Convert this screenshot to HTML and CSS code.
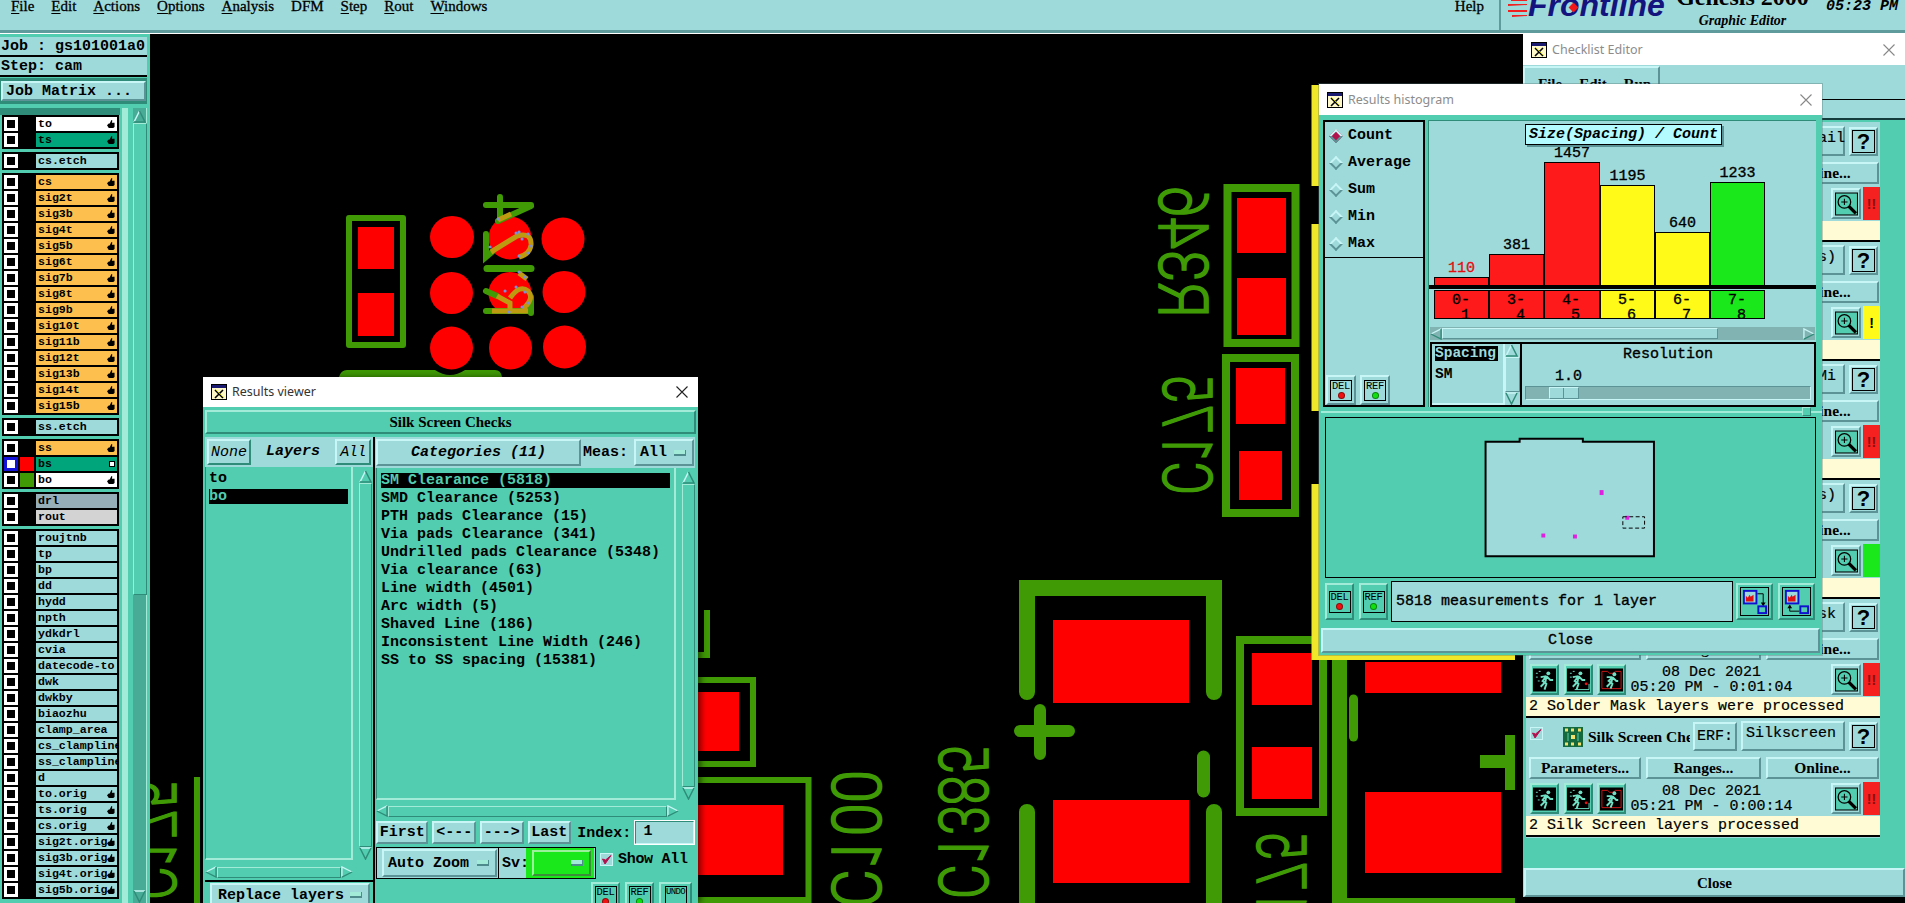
FILE: index.html
```html
<!DOCTYPE html>
<html lang="en">
<head>
<meta charset="utf-8">
<title>Genesis 2000 - Graphic Editor</title>
<link rel="stylesheet" href="styles.css">
</head>
<body>
<svg class="defs" aria-hidden="true">
  <symbol id="winicon" viewBox="0 0 16 16"><rect x=".5" y=".5" width="15" height="15" fill="#fff8c8" stroke="#000"/><rect x="1" y="1" width="14" height="3" fill="#1a1a70"/><path d="M4 6l8 8M12 6l-8 8" stroke="#000" stroke-width="1.6"/><path d="M5 6l7 7" stroke="#c8c800" stroke-width=".8"/></symbol>
  <symbol id="closex" viewBox="0 0 12 12"><path d="M.5.5l11 11M11.500.5l-11 11" fill="none" stroke="currentColor" stroke-width="1.1"/></symbol>
  <symbol id="hand" viewBox="0 0 9 9"><path d="M0 6l2-2 1 0 2-4 1 .5-.5 2.500H8.500V8L7 9H2z" fill="#000"/></symbol>
  <symbol id="a-up" viewBox="0 0 13 13"><path d="M6.500 1L1 12" fill="none" stroke="#c8f5f5" stroke-width="1.500"/><path d="M6.500 1L12 12H1" fill="none" stroke="#2f8c78" stroke-width="1.500"/></symbol>
  <symbol id="a-down" viewBox="0 0 13 13"><path d="M1 1H12" fill="none" stroke="#c8f5f5" stroke-width="1.500"/><path d="M1 1L6.500 12L12 1" fill="none" stroke="#2f8c78" stroke-width="1.500"/></symbol>
  <symbol id="a-left" viewBox="0 0 13 13"><path d="M1 6.500L12 1" fill="none" stroke="#c8f5f5" stroke-width="1.500"/><path d="M1 6.500L12 12V1" fill="none" stroke="#2f8c78" stroke-width="1.500"/></symbol>
  <symbol id="a-right" viewBox="0 0 13 13"><path d="M1 12V1L12 6.500" fill="none" stroke="#c8f5f5" stroke-width="1.500"/><path d="M12 6.500L1 12" fill="none" stroke="#2f8c78" stroke-width="1.500"/></symbol>
  <symbol id="mag" viewBox="0 0 22 22"><rect x=".5" y=".5" width="21" height="21" fill="#52cdaf" stroke="#000"/><circle cx="9" cy="9" r="6" fill="none" stroke="#000" stroke-width="1.200"/><path d="M6 9h6M9 6v6" stroke="#000"/><path d="M13 13l7 7" stroke="#000" stroke-width="3.200"/></symbol>
  <symbol id="run1" viewBox="0 0 24 24"><rect width="24" height="24" fill="#000"/><circle cx="16" cy="5" r="2" fill="#6fe0c4"/><path d="M14 8l-4 5 4 3-2 6M14 8l-1 6-5 5M14 8l4 4 3 0M8 9l6-1" fill="none" stroke="#6fe0c4" stroke-width="2"/><path d="M3 5h2M6 3h2M3 9h2M5 13h2" stroke="#6fe0c4"/></symbol>
  <symbol id="run2" viewBox="0 0 24 24"><rect width="24" height="24" fill="#000"/><circle cx="14" cy="5" r="2" fill="#6fe0c4"/><path d="M12 8l-4 5 4 3-2 6M12 8l-1 6-5 5M12 8l4 4 3 0M6 9l6-1" fill="none" stroke="#6fe0c4" stroke-width="2"/><path d="M3 5h2M6 3h2M3 9h2" stroke="#6fe0c4"/><path d="M8 22h15V16" fill="none" stroke="#6fe0c4"/><circle cx="20" cy="16" r="1.500" fill="#f01010"/></symbol>
  <symbol id="run3" viewBox="0 0 24 24"><rect width="24" height="24" fill="#000"/><path d="M2 3h6l2 2h4l2-2h6v18H2z" fill="none" stroke="#d01818"/><circle cx="15" cy="6" r="2" fill="#6fe0c4"/><path d="M13 9l-4 4 4 3-2 5M13 9l-1 5-5 5M13 9l4 4 2 0M7 9l6 0" fill="none" stroke="#6fe0c4" stroke-width="2"/></symbol>
  <symbol id="swap1" viewBox="0 0 30 30"><rect x=".5" y=".5" width="29" height="29" fill="none" stroke="#000"/><rect x="4" y="4" width="13" height="13" fill="#9fdadb" stroke="#1010d0" stroke-width="2"/><path d="M6 15V9l2 2 2-3 1 2 3-2v7z" fill="#e01010"/><path d="M18 7h6v12" fill="none" stroke="#000"/><path d="M21.500 16h5l-2.500 4z" fill="#000"/><rect x="19" y="20" width="8" height="7" fill="none" stroke="#1010d0" stroke-width="2"/></symbol>
  <symbol id="swap2" viewBox="0 0 30 30"><rect x=".5" y=".5" width="29" height="29" fill="none" stroke="#000"/><rect x="4" y="4" width="13" height="13" fill="#9fdadb" stroke="#1010d0" stroke-width="2"/><path d="M6 15V9l2 2 2-3 1 2 3-2v7z" fill="#e01010"/><path d="M8 19v6h10" fill="none" stroke="#000"/><path d="M5.500 22h5l-2.500-4z" fill="#000"/><rect x="19" y="20" width="8" height="7" fill="none" stroke="#1010d0" stroke-width="2"/></symbol>
  <symbol id="chip" viewBox="0 0 20 20"><rect width="20" height="20" fill="#146a3c"/><path d="M2 3h3M8 3h3M15 3h3M2 17h3M8 17h3M15 17h3" stroke="#f0e070" stroke-width="3"/><rect x="8" y="8" width="4" height="4" fill="#f0e070"/><path d="M5 6v8M15 6v8" stroke="#52cdaf"/></symbol>
  <symbol id="check" viewBox="0 0 13 13"><rect x=".5" y=".5" width="12" height="12" fill="#9fdadb" stroke="#c8f5f5"/><path d="M2.500 6L5 11 11 2.500 5.500 7z" fill="#b3104e" stroke="#b3104e"/></symbol>
  <symbol id="speed" viewBox="0 0 20 20"><path d="M0 6H19V7L0 8zM3 1H19V3L3 3zM0 12H19L19 14H0zM4 17H19V18L4 19z" fill="#f02020"/></symbol>
</svg>

<div class="app">
  <header class="topbar">
    <nav class="menubar">
      <span class="mi"><u>F</u>ile</span><span class="mi"><u>E</u>dit</span><span class="mi"><u>A</u>ctions</span><span class="mi"><u>O</u>ptions</span><span class="mi"><u>A</u>nalysis</span><span class="mi">DFM</span><span class="mi"><u>S</u>tep</span><span class="mi"><u>R</u>out</span><span class="mi"><u>W</u>indows</span>
      <span class="mi mi-help">Help</span>
    </nav>
    <div class="brand">
      <svg class="speed"><use href="#speed"/></svg>
      <span class="frontline">Frontline<i class="diamond"></i></span>
      <div class="product"><div class="genesis">Genesis 2000</div><div class="grapheditor">Graphic Editor</div></div>
      <span class="clock">05:23 PM</span>
    </div>
  </header>

  <main class="workspace">
    <aside class="left">
      <div class="jobline">Job : gs101001a0</div>
      <div class="jobline">Step: cam</div>
      <div class="matrix-frame"><button class="btn bv matrix">Job Matrix ...</button></div>
      <div class="layerwrap">
        <div class="layerlist">
          <div class="lg">
            <div class="lr"><i class="cb"></i><i class="sw"></i><span class="ln c-white">to<svg class="hd"><use href="#hand"/></svg></span></div>
            <div class="lr"><i class="cb"></i><i class="sw"></i><span class="ln c-green">ts<svg class="hd"><use href="#hand"/></svg></span></div>
          </div>
          <div class="lg"><div class="lr"><i class="cb"></i><i class="sw"></i><span class="ln">cs.etch</span></div></div>
          <div class="lg">
            <div class="lr"><i class="cb"></i><i class="sw"></i><span class="ln c-sig">cs<svg class="hd"><use href="#hand"/></svg></span></div>
            <div class="lr"><i class="cb"></i><i class="sw"></i><span class="ln c-sig">sig2t<svg class="hd"><use href="#hand"/></svg></span></div>
            <div class="lr"><i class="cb"></i><i class="sw"></i><span class="ln c-sig">sig3b<svg class="hd"><use href="#hand"/></svg></span></div>
            <div class="lr"><i class="cb"></i><i class="sw"></i><span class="ln c-sig">sig4t<svg class="hd"><use href="#hand"/></svg></span></div>
            <div class="lr"><i class="cb"></i><i class="sw"></i><span class="ln c-sig">sig5b<svg class="hd"><use href="#hand"/></svg></span></div>
            <div class="lr"><i class="cb"></i><i class="sw"></i><span class="ln c-sig">sig6t<svg class="hd"><use href="#hand"/></svg></span></div>
            <div class="lr"><i class="cb"></i><i class="sw"></i><span class="ln c-sig">sig7b<svg class="hd"><use href="#hand"/></svg></span></div>
            <div class="lr"><i class="cb"></i><i class="sw"></i><span class="ln c-sig">sig8t<svg class="hd"><use href="#hand"/></svg></span></div>
            <div class="lr"><i class="cb"></i><i class="sw"></i><span class="ln c-sig">sig9b<svg class="hd"><use href="#hand"/></svg></span></div>
            <div class="lr"><i class="cb"></i><i class="sw"></i><span class="ln c-sig">sig10t<svg class="hd"><use href="#hand"/></svg></span></div>
            <div class="lr"><i class="cb"></i><i class="sw"></i><span class="ln c-sig">sig11b<svg class="hd"><use href="#hand"/></svg></span></div>
            <div class="lr"><i class="cb"></i><i class="sw"></i><span class="ln c-sig">sig12t<svg class="hd"><use href="#hand"/></svg></span></div>
            <div class="lr"><i class="cb"></i><i class="sw"></i><span class="ln c-sig">sig13b<svg class="hd"><use href="#hand"/></svg></span></div>
            <div class="lr"><i class="cb"></i><i class="sw"></i><span class="ln c-sig">sig14t<svg class="hd"><use href="#hand"/></svg></span></div>
            <div class="lr"><i class="cb"></i><i class="sw"></i><span class="ln c-sig">sig15b<svg class="hd"><use href="#hand"/></svg></span></div>
          </div>
          <div class="lg"><div class="lr"><i class="cb"></i><i class="sw"></i><span class="ln">ss.etch</span></div></div>
          <div class="lg">
            <div class="lr"><i class="cb"></i><i class="sw"></i><span class="ln c-sig">ss<svg class="hd"><use href="#hand"/></svg></span></div>
            <div class="lr"><i class="cb cb-on"></i><i class="sw sw-red"></i><span class="ln c-green">bs<i class="grid-mark"></i></span></div>
            <div class="lr"><i class="cb"></i><i class="sw sw-grn"></i><span class="ln c-white">bo<svg class="hd"><use href="#hand"/></svg></span></div>
          </div>
          <div class="lg">
            <div class="lr"><i class="cb"></i><i class="sw"></i><span class="ln c-drl">drl</span></div>
            <div class="lr"><i class="cb"></i><i class="sw"></i><span class="ln c-rout">rout</span></div>
          </div>
          <div class="lg">
            <div class="lr"><i class="cb"></i><i class="sw"></i><span class="ln">roujtnb</span></div>
            <div class="lr"><i class="cb"></i><i class="sw"></i><span class="ln">tp</span></div>
            <div class="lr"><i class="cb"></i><i class="sw"></i><span class="ln">bp</span></div>
            <div class="lr"><i class="cb"></i><i class="sw"></i><span class="ln">dd</span></div>
            <div class="lr"><i class="cb"></i><i class="sw"></i><span class="ln">hydd</span></div>
            <div class="lr"><i class="cb"></i><i class="sw"></i><span class="ln">npth</span></div>
            <div class="lr"><i class="cb"></i><i class="sw"></i><span class="ln">ydkdrl</span></div>
            <div class="lr"><i class="cb"></i><i class="sw"></i><span class="ln">cvia</span></div>
            <div class="lr"><i class="cb"></i><i class="sw"></i><span class="ln">datecode-to</span></div>
            <div class="lr"><i class="cb"></i><i class="sw"></i><span class="ln">dwk</span></div>
            <div class="lr"><i class="cb"></i><i class="sw"></i><span class="ln">dwkby</span></div>
            <div class="lr"><i class="cb"></i><i class="sw"></i><span class="ln">biaozhu</span></div>
            <div class="lr"><i class="cb"></i><i class="sw"></i><span class="ln">clamp_area</span></div>
            <div class="lr"><i class="cb"></i><i class="sw"></i><span class="ln">cs_clampline</span></div>
            <div class="lr"><i class="cb"></i><i class="sw"></i><span class="ln">ss_clampline</span></div>
            <div class="lr"><i class="cb"></i><i class="sw"></i><span class="ln">d</span></div>
            <div class="lr"><i class="cb"></i><i class="sw"></i><span class="ln">to.orig<svg class="hd"><use href="#hand"/></svg></span></div>
            <div class="lr"><i class="cb"></i><i class="sw"></i><span class="ln">ts.orig<svg class="hd"><use href="#hand"/></svg></span></div>
            <div class="lr"><i class="cb"></i><i class="sw"></i><span class="ln">cs.orig<svg class="hd"><use href="#hand"/></svg></span></div>
            <div class="lr"><i class="cb"></i><i class="sw"></i><span class="ln">sig2t.orig<svg class="hd"><use href="#hand"/></svg></span></div>
            <div class="lr"><i class="cb"></i><i class="sw"></i><span class="ln">sig3b.orig<svg class="hd"><use href="#hand"/></svg></span></div>
            <div class="lr"><i class="cb"></i><i class="sw"></i><span class="ln">sig4t.orig<svg class="hd"><use href="#hand"/></svg></span></div>
            <div class="lr"><i class="cb"></i><i class="sw"></i><span class="ln">sig5b.orig<svg class="hd"><use href="#hand"/></svg></span></div>
          </div>
        </div>
        <div class="rail-light"></div>
        <div class="rail">
          <svg class="ar"><use href="#a-up"/></svg>
          <div class="rail-thumb"></div>
          <div class="rail-trough"></div>
          <svg class="ar"><use href="#a-down"/></svg>
        </div>
      </div>
    </aside>

    <div class="canvas">
      <svg class="pcb" viewBox="150 34 1755 869">
        <!-- left pad block -->
        <rect class="g6b" x="349" y="218" width="54" height="127"/>
        <rect class="r" x="358" y="227" width="36" height="42"/>
        <rect class="r" x="358" y="293" width="36" height="43"/>
        <ellipse class="r" cx="452" cy="237" rx="22" ry="21"/>
        <ellipse class="r" cx="510" cy="238" rx="21.500" ry="21.500"/>
        <ellipse class="r" cx="563" cy="239" rx="21.500" ry="21.500"/>
        <ellipse class="r" cx="451.500" cy="293" rx="21.500" ry="21"/>
        <ellipse class="r" cx="510" cy="293" rx="21.500" ry="21"/>
        <ellipse class="r" cx="564" cy="292" rx="21.500" ry="21"/>
        <ellipse class="r" cx="451.500" cy="348" rx="21.500" ry="21.500"/>
        <ellipse class="r" cx="510.500" cy="348" rx="21.500" ry="21.500"/>
        <ellipse class="r" cx="564.500" cy="347" rx="21.500" ry="21.500"/>
        <path class="g6" d="M486 205H531M500 197V217M531 206L498 221"/>
        <path class="g6" d="M486 234V257L492 252"/>
        <path class="g7" d="M487 268.500H531"/>
        <path class="g6" d="M486 291L497 296M486 311H531M531 297V313"/>
        <path class="y5" d="M498 220L511 214M491 252L517 236Q532 232 531 245Q530 254 519 257M519 273L527 279M497 296L510 303V311M510 298Q520 284 528 291Q535 298 523 309M492 311H528"/>
        <path class="dots" d="M498 219h.1M519 232h.1M516 233h.1M528 234h.1M522 239h.1M490 247h.1M531 246h.1M528 253h.1M519 256h.1M519 272h.1M525 277h.1M509 312h.1M505 291h.1M516 287h.1M525 292h.1M528 303h.1M522 307h.1"/>
        <path class="gf" d="M339 377Q341 370 347 370H435Q450 380 465 370H495Q501 370 502 377Z"/>

        <!-- upper right parts -->
        <rect class="g8" x="1227.500" y="188" width="68" height="155"/>
        <rect class="r" x="1237" y="198" width="49" height="55"/>
        <rect class="r" x="1237" y="278" width="49" height="57"/>
        <rect class="g8" x="1226" y="358" width="69" height="155"/>
        <rect class="r" x="1236" y="368" width="49" height="56"/>
        <rect class="r" x="1239" y="451" width="43" height="49"/>
        <text class="silk" font-size="68" textLength="132" lengthAdjust="spacingAndGlyphs" transform="matrix(0 -1 -1 0 1159 318)">R346</text>
        <text class="silk" font-size="68" textLength="119" lengthAdjust="spacingAndGlyphs" transform="matrix(0 -1 -1 0 1163 495)">C175</text>

        <!-- big capacitor -->
        <path class="g16" d="M1027 692V588H1214V692"/>
        <path class="g16" d="M1027 812V910M1214 812V910"/>
        <rect class="r" x="1053" y="620" width="136" height="83"/>
        <rect class="r" x="1053" y="800" width="136" height="83"/>
        <path class="g12" d="M1020 731H1069M1040 710V754"/>
        <path class="g13" d="M1203.500 757V791"/>
        <text class="silk" font-size="68" textLength="153" lengthAdjust="spacingAndGlyphs" transform="matrix(0 -1 -1 0 939 899)">C1385</text>
        <text class="silk" font-size="68" textLength="138" lengthAdjust="spacingAndGlyphs" transform="matrix(0 -1 -1 0 832 908)">C100</text>

        <!-- pads next to the results viewer -->
        <path class="g6t" d="M707 610V655H698M690 680H753V764H690"/>
        <rect class="r" x="690" y="692" width="49" height="59"/>
        <path class="g6t" d="M695 780H808.500V900H695"/>
        <rect class="r" x="690" y="805" width="93" height="70"/>
        <path class="g6t" d="M197 777V903"/>
        <text class="silk" font-size="68" textLength="119" lengthAdjust="spacingAndGlyphs" transform="matrix(0 -1 -1 0 127 900)">C175</text>

        <!-- lower right parts -->
        <rect class="g8" x="1240" y="640" width="83" height="172"/>
        <rect class="r" x="1252" y="653" width="60" height="52"/>
        <rect class="r" x="1252" y="747" width="60" height="52"/>
        <text class="silk" font-size="68" textLength="119" lengthAdjust="spacingAndGlyphs" transform="matrix(0 -1 -1 0 1257 952)">C175</text>
        <rect class="gf" x="1332" y="660" width="15" height="243"/>
        <path class="g9" d="M1353.500 699V737"/>
        <rect class="r" x="1365" y="662" width="136" height="31"/>
        <rect class="r" x="1365" y="792" width="136" height="81"/>
        <rect class="gf" x="1505" y="735" width="10" height="55"/>
        <rect class="gf" x="1480" y="755" width="30" height="13"/>
        <rect class="gf" x="1340" y="898" width="175" height="5"/>

        <!-- yellow frame of a window under the histogram -->
        <path class="yf" d="M1311.500 85H1319V186H1311.500ZM1311.500 224H1319V411H1311.500ZM1311.500 484H1319V655H1515V660H1311.500Z"/>
      </svg>
    </div>
  </main>

  <!-- Checklist editor -->
  <section class="win win-check">
    <header class="tbar tbar-off"><svg class="wi"><use href="#winicon"/></svg><span class="tt">Checklist Editor</span><svg class="xx"><use href="#closex"/></svg></header>
    <div class="ck-menu">
      <div class="bv ck-menubox"><span>File</span><span>Edit</span><span>Run</span></div>
    </div>
    <div class="ck-strip"></div>
    <div class="ck-body">
      <div class="ck-list">
        <article class="entry entry-first">
          <div class="e1"><svg class="chk"><use href="#check"/></svg><svg class="chipi"><use href="#chip"/></svg><b class="etitle"></b><button class="btn bv erf">ERF:</button><div class="bv field">Signal Fail</div><button class="btn bv help">?</button></div>
          <div class="e2"><button class="btn bv p1">Parameters...</button><button class="btn bv p2">Ranges...</button><button class="btn bv p3">Online...</button></div>
          <div class="e3"><span class="bvt ib"><svg><use href="#run1"/></svg></span><span class="bvt ib"><svg><use href="#run2"/></svg></span><span class="bvt ib"><svg><use href="#run3"/></svg></span><div class="etime"></div><span class="bvt ib mg"><svg><use href="#mag"/></svg></span><span class="st st-red">!!</span></div>
          <div class="msg"></div>
        </article>
        <article class="entry">
          <div class="e1"><svg class="chk"><use href="#check"/></svg><svg class="chipi"><use href="#chip"/></svg><b class="etitle"></b><button class="btn bv erf">ERF:</button><div class="bv field">Nets(pads)</div><button class="btn bv help">?</button></div>
          <div class="e2"><button class="btn bv p1">Parameters...</button><button class="btn bv p2">Ranges...</button><button class="btn bv p3">Online...</button></div>
          <div class="e3"><span class="bvt ib"><svg><use href="#run1"/></svg></span><span class="bvt ib"><svg><use href="#run2"/></svg></span><span class="bvt ib"><svg><use href="#run3"/></svg></span><div class="etime"></div><span class="bvt ib mg"><svg><use href="#mag"/></svg></span><span class="st st-yel">!</span></div>
          <div class="msg"></div>
        </article>
        <article class="entry">
          <div class="e1"><svg class="chk"><use href="#check"/></svg><svg class="chipi"><use href="#chip"/></svg><b class="etitle"></b><button class="btn bv erf">ERF:</button><div class="bv field">Spacing Mi</div><button class="btn bv help">?</button></div>
          <div class="e2"><button class="btn bv p1">Parameters...</button><button class="btn bv p2">Ranges...</button><button class="btn bv p3">Online...</button></div>
          <div class="e3"><span class="bvt ib"><svg><use href="#run1"/></svg></span><span class="bvt ib"><svg><use href="#run2"/></svg></span><span class="bvt ib"><svg><use href="#run3"/></svg></span><div class="etime"></div><span class="bvt ib mg"><svg><use href="#mag"/></svg></span><span class="st st-red">!!</span></div>
          <div class="msg"></div>
        </article>
        <article class="entry">
          <div class="e1"><svg class="chk"><use href="#check"/></svg><svg class="chipi"><use href="#chip"/></svg><b class="etitle"></b><button class="btn bv erf">ERF:</button><div class="bv field">Nets(pads)</div><button class="btn bv help">?</button></div>
          <div class="e2"><button class="btn bv p1">Parameters...</button><button class="btn bv p2">Ranges...</button><button class="btn bv p3">Online...</button></div>
          <div class="e3"><span class="bvt ib"><svg><use href="#run1"/></svg></span><span class="bvt ib"><svg><use href="#run2"/></svg></span><span class="bvt ib"><svg><use href="#run3"/></svg></span><div class="etime"></div><span class="bvt ib mg"><svg><use href="#mag"/></svg></span><span class="st st-grn"></span></div>
          <div class="msg"></div>
        </article>
        <article class="entry">
          <div class="e1"><svg class="chk"><use href="#check"/></svg><svg class="chipi"><use href="#chip"/></svg><b class="etitle">Solder Mask Che</b><button class="btn bv erf">ERF:</button><div class="bv field">SolderMask</div><button class="btn bv help">?</button></div>
          <div class="e2"><button class="btn bv p1">Parameters...</button><button class="btn bv p2">Ranges...</button><button class="btn bv p3">Online...</button></div>
          <div class="e3"><span class="bvt ib"><svg><use href="#run1"/></svg></span><span class="bvt ib"><svg><use href="#run2"/></svg></span><span class="bvt ib"><svg><use href="#run3"/></svg></span><div class="etime">08 Dec 2021<br>05:20 PM - 0:01:04</div><span class="bvt ib mg"><svg><use href="#mag"/></svg></span><span class="st st-red">!!</span></div>
          <div class="msg">2 Solder Mask layers were processed</div>
        </article>
        <article class="entry">
          <div class="e1"><svg class="chk"><use href="#check"/></svg><svg class="chipi"><use href="#chip"/></svg><b class="etitle">Silk Screen Che</b><button class="btn bv erf">ERF:</button><div class="bv field">Silkscreen</div><button class="btn bv help">?</button></div>
          <div class="e2"><button class="btn bv p1">Parameters...</button><button class="btn bv p2">Ranges...</button><button class="btn bv p3">Online...</button></div>
          <div class="e3"><span class="bvt ib"><svg><use href="#run1"/></svg></span><span class="bvt ib"><svg><use href="#run2"/></svg></span><span class="bvt ib"><svg><use href="#run3"/></svg></span><div class="etime">08 Dec 2021<br>05:21 PM - 0:00:14</div><span class="bvt ib mg"><svg><use href="#mag"/></svg></span><span class="st st-red">!!</span></div>
          <div class="msg">2 Silk Screen layers processed</div>
        </article>
      </div>
    </div>
    <button class="btn bv ck-close">Close</button>
  </section>

  <!-- Results histogram -->
  <section class="win win-hist">
    <header class="tbar tbar-off"><svg class="wi"><use href="#winicon"/></svg><span class="tt">Results histogram</span><svg class="xx"><use href="#closex"/></svg></header>
    <div class="hist-top">
      <div class="radios">
        <div class="radio-group">
          <label class="radio"><i class="dia dia-on"></i>Count</label>
          <label class="radio"><i class="dia"></i>Average</label>
          <label class="radio"><i class="dia"></i>Sum</label>
          <label class="radio"><i class="dia"></i>Min</label>
          <label class="radio"><i class="dia"></i>Max</label>
        </div>
        <div class="radio-tools">
          <span class="bv tool"><span class="tool-in"><span class="tool-t">DEL</span><i class="dot dot-r"></i></span></span>
          <span class="bv tool"><span class="tool-in"><span class="tool-t">REF</span><i class="dot dot-g"></i></span></span>
        </div>
      </div>
      <div class="chartcol">
        <div class="chart">
          <div class="chart-title">Size(Spacing) / Count</div>
          <div class="bar-col"><span class="bar-n bar-n-red">110</span><div class="bar b-r" style="height:8px"></div></div>
          <div class="bar-col"><span class="bar-n">381</span><div class="bar b-r" style="height:31px"></div></div>
          <div class="bar-col"><span class="bar-n">1457</span><div class="bar b-r" style="height:123px"></div></div>
          <div class="bar-col"><span class="bar-n">1195</span><div class="bar b-y" style="height:100px"></div></div>
          <div class="bar-col"><span class="bar-n">640</span><div class="bar b-y" style="height:53px"></div></div>
          <div class="bar-col"><span class="bar-n">1233</span><div class="bar b-g" style="height:103px"></div></div>
        </div>
        <div class="axis"></div>
        <div class="bins">
          <div class="bin b-r">0-
 1</div>
          <div class="bin b-r">3-
 4</div>
          <div class="bin b-r">4-
 5</div>
          <div class="bin b-y">5-
 6</div>
          <div class="bin b-y">6-
 7</div>
          <div class="bin b-g">7-
 8</div>
        </div>
        <div class="hs hs-hist"><svg class="ar"><use href="#a-left"/></svg><div class="hs-thumb"></div><svg class="ar"><use href="#a-right"/></svg></div>
        <div class="lowpanel">
          <div class="speclist"><span class="spec-on">Spacing</span><span>SM</span></div>
          <div class="vs vs-spec"><svg class="ar"><use href="#a-up"/></svg><div class="vs-thumb"></div><svg class="ar"><use href="#a-down"/></svg></div>
          <div class="respane">
            <div class="res-title">Resolution</div>
            <div class="res-val">1.0</div>
            <div class="slider"><div class="slider-thumb"></div></div>
          </div>
        </div>
      </div>
    </div>
    <div class="sash"><i class="sash-h"></i></div>
    <div class="mappane">
      <svg class="board" viewBox="1325 417 491 161">
        <path d="M1484.500 441H1519V438H1583V441H1655V557H1484.500Z" fill="#9fdadb" stroke="#000" stroke-width="2"/>
        <rect x="1600" y="490" width="4" height="5" fill="#e020e0"/>
        <rect x="1626" y="516" width="4" height="4" fill="#e020e0"/>
        <rect x="1541" y="534" width="4" height="4" fill="#e020e0"/>
        <rect x="1573" y="535" width="4" height="4" fill="#e020e0"/>
        <rect x="1623.500" y="517" width="22" height="11.500" fill="none" stroke="#000" stroke-dasharray="4 2.500"/>
      </svg>
    </div>
    <div class="hist-foot">
      <span class="bvt tool"><span class="tool-in"><span class="tool-t">DEL</span><i class="dot dot-r"></i></span></span>
      <span class="bvt tool"><span class="tool-in"><span class="tool-t">REF</span><i class="dot dot-g"></i></span></span>
      <div class="hist-status">5818 measurements for 1 layer</div>
      <span class="bvt tool tool-w"><svg><use href="#swap1"/></svg></span>
      <span class="bvt tool tool-w"><svg><use href="#swap2"/></svg></span>
    </div>
    <button class="btn bv hist-close">Close</button>
  </section>

  <!-- Results viewer -->
  <section class="win win-results">
    <header class="tbar"><svg class="wi"><use href="#winicon"/></svg><span class="tt">Results viewer</span><svg class="xx"><use href="#closex"/></svg></header>
    <button class="btn bvt rv-head">Silk Screen Checks</button>
    <div class="rv-cols">
      <div class="rv-left">
        <div class="tabs">
          <button class="btn bv tab-none">None</button>
          <span class="tab-layers">Layers</span>
          <button class="btn bv tab-all">All</button>
        </div>
        <div class="rv-listrow rv-listrow-l">
          <div class="rvlist rvlist-l"><div class="li">to</div><div class="li li-on">bo</div></div>
          <div class="vs"><svg class="ar"><use href="#a-up"/></svg><div class="vs-thumb"></div><svg class="ar"><use href="#a-down"/></svg></div>
        </div>
        <div class="hs hs-l"><svg class="ar"><use href="#a-left"/></svg><div class="hs-thumb"></div><svg class="ar"><use href="#a-right"/></svg></div>
        <div class="rv-div"></div>
        <button class="btn bv replace">Replace layers<i class="ddmark"></i></button>
      </div>
      <div class="rv-right">
        <div class="tabs tabs-r">
          <button class="btn bv tab-cat">Categories (11)</button>
          <span class="meas">Meas:</span>
          <button class="btn bv tab-meas">All<i class="ddmark"></i></button>
        </div>
        <div class="rv-listrow rv-listrow-r">
          <div class="rvlist rvlist-r">
            <div class="li li-on">SM Clearance (5818)</div>
            <div class="li">SMD Clearance (5253)</div>
            <div class="li">PTH pads Clearance (15)</div>
            <div class="li">Via pads Clearance (341)</div>
            <div class="li">Undrilled pads Clearance (5348)</div>
            <div class="li">Via clearance (63)</div>
            <div class="li">Line width (4501)</div>
            <div class="li">Arc width (5)</div>
            <div class="li">Shaved Line (186)</div>
            <div class="li">Inconsistent Line Width (246)</div>
            <div class="li">SS to SS spacing (15381)</div>
          </div>
          <div class="vs"><svg class="ar"><use href="#a-up"/></svg><div class="vs-thumb"></div><svg class="ar"><use href="#a-down"/></svg></div>
        </div>
        <div class="hs hs-r"><svg class="ar"><use href="#a-left"/></svg><div class="hs-thumb"></div><svg class="ar"><use href="#a-right"/></svg></div>
        <div class="navrow">
          <button class="btn bv nav-first">First</button>
          <button class="btn bv nav-a">&lt;---</button>
          <button class="btn bv nav-a">---&gt;</button>
          <button class="btn bv nav-a">Last</button>
          <span class="nav-label">Index:</span>
          <div class="bv nav-field">1</div>
        </div>
        <div class="optrow">
          <div class="optbox">
            <button class="btn bv autozoom">Auto Zoom<i class="ddmark"></i></button>
            <span class="sv">Sv:</span>
            <div class="sv-green"><button class="btn bv sv-btn"><i class="ddmark"></i></button></div>
          </div>
          <svg class="chk opt-check"><use href="#check"/></svg>
          <span class="showall">Show All</span>
        </div>
        <div class="toolrow">
          <span class="bvt tool tool-s"><span class="tool-in"><span class="tool-t">DEL</span><i class="dot dot-r"></i></span></span>
          <span class="bvt tool tool-s"><span class="tool-in"><span class="tool-t">REF</span><i class="dot dot-g"></i></span></span>
          <span class="bvt tool tool-s"><span class="tool-in"><span class="tool-t tool-u">UNDO</span></span></span>
        </div>
      </div>
    </div>
  </section>
</div>
</body>
</html>
```

FILE: styles.css
```css
:root{
  --lt:#9fdadb;
  --teal:#52cdaf;
  --mono:"Liberation Mono","DejaVu Sans Mono",monospace;
  --serif:"Liberation Serif","Times New Roman",serif;
}
*{box-sizing:border-box}
html,body{margin:0;padding:0;background:#000}
body{width:1905px;height:903px;overflow:hidden;font:bold 15px/15px var(--mono);color:#000}
.defs{position:absolute;width:0;height:0}
.app{position:relative;width:1905px;height:903px;display:grid;grid-template-rows:34px 1fr;overflow:hidden}

.btn{font:inherit;color:inherit;padding:0;margin:0;cursor:default;display:flex;align-items:center;justify-content:center;white-space:pre}
.bv{border:2px solid;border-color:#c8f5f5 #5b9396 #5b9396 #c8f5f5;background:var(--lt)}
.bvt{border:2px solid;border-color:#a3ebd9 #2f8c78 #2f8c78 #a3ebd9;background:var(--teal)}

/* top bar */
.topbar{display:flex;background:var(--lt);border-bottom:1px solid #fff;box-shadow:inset 0 -3px 0 #5f9a9c;overflow:hidden;height:34px}
.menubar{width:1501px;display:flex;gap:17px;padding-left:11px;border-right:2px solid #5f9a9c;align-items:flex-start;height:33px}
.mi{font:normal 15px/16px var(--serif);margin-top:-2px;-webkit-text-stroke:.3px #000}
.mi u{text-underline-offset:2px}
.mi-help{margin-left:auto;margin-right:15px}
.brand{flex:1;display:flex;align-items:flex-start;padding-left:7px;position:relative;height:33px}
.speed{width:20px;height:20px;margin-top:-2px}
.frontline{position:relative;font:italic bold 32px/32px "Liberation Sans",sans-serif;color:#14147e;margin-top:-11px;margin-left:0;width:145px;white-space:nowrap}
.diamond{position:absolute;left:42px;top:15px;width:7px;height:7px;background:#f01818;transform:rotate(45deg)}
.product{width:137px;text-align:center;margin-left:1px}
.genesis{font:bold 24px/24px var(--serif);margin-top:-15px;white-space:nowrap}
.grapheditor{font:italic bold 14px/16px var(--serif);margin-top:4px}
.clock{font:italic bold 15px/15px var(--mono);margin-left:15px;margin-top:-1px;white-space:pre}

/* left panel */
.workspace{display:flex;min-height:0;background:#000}
.left{width:150px;background:var(--teal);padding-top:3px;flex:none;overflow:hidden;display:flex;flex-direction:column}
.jobline{height:20px;margin-right:3px;background:var(--lt);border-bottom:2px solid #000;padding-left:1px;line-height:19px;white-space:pre}
.matrix-frame{height:26px;margin:1px 3px 0 0;background:#2f8c78;padding:3px 1px}
.matrix{width:100%;height:20px;justify-content:flex-start;padding-left:3px}
.layerwrap{flex:1;display:flex;margin-top:4px;min-height:0}
.layerlist{width:120px;padding-left:2px;border-top:7px solid #2f8c78;display:flex;flex-direction:column;gap:3px;overflow:hidden;flex:none}
.lg{background:#000;padding:2px 2px 0;width:117px}
.lr{display:flex;align-items:flex-start;height:16px;gap:2px}
.cb{width:14px;height:14px;border:3px solid #fff;background:#000;flex:none}
.cb-on{border-color:#1414d8;background:#fff;box-shadow:inset 0 0 0 1px #fff}
.sw{width:14px;height:14px;flex:none}
.sw-red{background:#f00}
.sw-grn{background:#3f9a05}
.ln{width:81px;height:14px;flex:none;position:relative;background:var(--lt);font:bold 11.600px/14px var(--mono);padding-left:2px;overflow:hidden;white-space:nowrap}
.hd{position:absolute;right:2px;top:3px;width:8px;height:8px}
.grid-mark{position:absolute;right:2px;top:4px;width:6px;height:6px;border:1px solid #000;background:#fff}
.c-white{background:#fff}
.c-green{background:#00a57c}
.c-sig{background:#fdc04f}
.c-drl{background:#96aeb8}
.c-rout{background:#d3d3d3}
.rail-light{width:6px;margin-left:2px;background:#a3ebd9;flex:none}
.rail{width:14px;margin-left:5px;display:flex;flex-direction:column;flex:none;padding-top:2px;background:#47ab96;box-shadow:inset -1px 0 0 #a3ebd9}
.rail-thumb{height:472px;background:var(--teal);border:1px solid;border-color:#a3ebd9 #2f8c78 #2f8c78 #a3ebd9}
.rail-trough{flex:1}
.ar{width:13px;height:13px;flex:none;display:block}

/* canvas */
.canvas{flex:1;position:relative;overflow:hidden;background:#000}
.pcb{position:absolute;left:0;top:0;width:1755px;height:869px}
.r{fill:#f00}
.gf{fill:#3f9a05}
.g6,.g6b,.g7,.g8,.g9,.g12,.g13,.g16,.g6t{fill:none;stroke:#3f9a05}
.g6{stroke-width:6;stroke-linecap:round}
.g6b{stroke-width:6;stroke-linejoin:round}
.g6t{stroke-width:6}
.g7{stroke-width:7;stroke-linecap:round}
.g8{stroke-width:8}
.g9{stroke-width:9;stroke-linecap:round}
.g12{stroke-width:12;stroke-linecap:round}
.g13{stroke-width:13;stroke-linecap:round}
.g16{stroke-width:16;stroke-linecap:round}
.y5{fill:none;stroke:#bd9a10;stroke-width:5}
.dots{fill:none;stroke:#7a8ee0;stroke-width:3;stroke-linecap:round}
.yf{fill:#f0e62a}
.silk{font-family:Roboto,"Liberation Sans",sans-serif;font-weight:300;fill:#3f9a05;stroke:#3f9a05;stroke-width:1.600}

/* windows */
.win{position:absolute;display:flex;flex-direction:column;overflow:hidden}
.tbar{height:30px;flex:none;background:#fff;display:flex;align-items:center;padding:0 10px 0 8px;font:12.500px/30px "Noto Sans",sans-serif;color:#333}
.tbar-off{color:#8c8c8c;height:31px}
.wi{width:16px;height:16px;flex:none}
.tt{margin-left:5px;flex:1}
.xx{width:12px;height:12px;flex:none;color:#222}
.tbar-off .xx{color:#888}

/* results viewer */
.win-results{left:203px;top:377px;width:495px;height:526px;background:var(--teal);box-shadow:3px 0 6px rgba(0,0,0,.5)}
.rv-head{height:24px;margin:3px 2px;flex:none;font:bold 15px/20px var(--serif)}
.rv-cols{flex:1;display:flex;padding-left:2px;min-height:0}
.rv-left{width:168px;flex:none;display:flex;flex-direction:column}
.rv-right{width:322px;flex:none;border-left:2px solid #000;padding-left:1px;display:flex;flex-direction:column}
.tabs{height:30px;flex:none;background:var(--lt);display:flex;align-items:flex-start;padding:2px;gap:4px}
.tabs-r{padding:2px 0 0 1px;gap:0;margin-left:-1px;height:31px}
.tabs button,.tab-layers{font-style:italic}
.tab-none{width:44px;height:26px;font-weight:normal;border-color:#c8f5f5 #2f8c78 #2f8c78 #c8f5f5}
.tab-layers{width:76px;height:26px;text-align:center;line-height:26px}
.tab-all{width:36px;height:26px;font-weight:normal;border-color:#c8f5f5 #2f8c78 #2f8c78 #c8f5f5;letter-spacing:-.500px}
.tab-cat{width:205px;height:27px}
.meas{width:53px;padding:6px 0 0 2px}
.tab-meas{width:60px;height:27px;font-style:normal!important;justify-content:flex-start;padding-left:4px;position:relative}
.ddmark{position:absolute;right:6px;top:50%;width:12px;height:6px;margin-top:-3px;background:#a3ebd9;border-bottom:2px solid #4d8b8c;border-right:1px solid #4d8b8c}
.rv-listrow{display:flex;flex:none}
.rv-listrow-l{height:393px}
.rv-listrow-r{height:332px}
.rvlist{border-right:2px solid #a3ebd9;border-bottom:2px solid #a3ebd9;border-left:1px solid #2f8c78;overflow:hidden}
.rvlist-l{width:148px;padding:4px 3px}
.rvlist-r{width:303px;padding:5px 4px}
.li{height:15px;margin-bottom:3px;line-height:15px;white-space:pre}
.li-on{background:#000;color:var(--teal)}
.vs{width:13px;margin-left:6px;display:flex;flex-direction:column;margin-top:3px}
.vs-thumb{flex:1;border:1px solid;border-color:#a3ebd9 #2f8c78 #2f8c78 #a3ebd9;background:var(--teal)}
.rv-listrow-l .vs{margin-top:3px}
.hs{display:flex;align-items:center;height:12px;flex:none;margin-top:5px}
.hs .ar{width:12px;height:12px}
.hs-thumb{flex:1;height:11px;border:1px solid;border-color:#a3ebd9 #2f8c78 #2f8c78 #a3ebd9;background:var(--teal)}
.hs-l{width:148px;margin-top:6px}
.hs-r{width:303px}
.rv-div{height:2px;background:#000;margin-top:2px;flex:none}
.replace{height:24px;margin:1px 0 0 5px;width:160px;flex:none;justify-content:flex-start;padding-left:6px;position:relative}
.navrow{display:flex;align-items:flex-start;margin-top:3px;height:25px;flex:none}
.nav-first{width:53px;height:23px;margin:1px 4px 0 0}
.nav-a{width:44px;height:23px;margin:1px 4px 0 0}
.nav-label{margin:6px 0 0 2px;width:57px}
.nav-field{width:62px;height:25px;border-color:#2f8c78 #c8f5f5 #c8f5f5 #2f8c78;padding:2px 0 0 8px;outline:1px solid #fff;outline-offset:-1px}
.optrow{display:flex;align-items:flex-start;margin-top:2px;height:32px;flex:none}
.optbox{width:220px;height:32px;border:1px solid #000;background:var(--lt);display:flex;margin-left:0;flex:none}
.autozoom{width:115px;height:28px;margin:1px 0 0 5px;justify-content:flex-start;padding-left:4px;position:relative}
.sv{width:28px;margin-left:1px;padding:8px 0 0 3px;border-left:1px solid #000}
.sv-green{width:68px;background:#1ae81a;padding:2px 0 0 6px}
.sv-btn{width:59px;height:26px;background:#1ae81a;position:relative;border-color:#9bf09b #3c8c3c #3c8c3c #9bf09b}
.opt-check{width:13px;height:13px;margin:6px 0 0 4px;flex:none}
.chk{width:13px;height:13px;flex:none}
.showall{margin:5px 0 0 5px;white-space:pre;letter-spacing:-.300px}
.toolrow{display:flex;justify-content:flex-end;gap:5px;margin-top:3px;padding-right:3px}
.tool{display:flex;align-items:center;justify-content:center;width:29px;height:37px;flex:none}
.tool-s{height:34px;flex:none}
.tool-s:last-child{width:33px}
.tool-in{width:22px;height:22px;border:1px solid #000;display:flex;flex-direction:column;align-items:center;overflow:hidden}
.tool-s .tool-in{height:27px;align-self:flex-start;margin-top:2px}
.tool-t{font:normal 10.500px/11px var(--mono);letter-spacing:-.300px}
.tool-u{font-size:9px;letter-spacing:-.600px}
.dot{width:7px;height:7px;border-radius:50%;margin-top:0;flex:none;border:1px solid rgba(0,0,0,.4)}
.dot-r{background:#f01010}
.dot-g{background:#10e010}

/* histogram */
.win-hist{left:1319px;top:84px;width:503px;height:571px;background:var(--teal);box-shadow:0 0 0 1px rgba(80,110,110,.35)}
.hist-top{display:flex;gap:3px;padding:5px 6px 0 4px;height:292px;flex:none}
.radios{width:102px;height:287px;border:2px solid #000;border-right-width:2px;background:var(--lt);display:flex;flex-direction:column;flex:none}
.radio-group{height:136px;border-bottom:1px solid #000}
.radio{display:flex;align-items:center;height:27px;padding-left:6px;gap:7px;white-space:pre}
.dia{width:10px;height:10px;transform:rotate(45deg);border:2px solid;border-color:#c8f5f5 #5b9396 #5b9396 #c8f5f5;background:var(--lt);flex:none}
.dia-on{background:#b3104e}
.radio-tools{margin-top:auto;display:flex;gap:4px;padding:0 0 0 1px}
.radio-tools .tool{width:30px;height:30px}
.radio-tools .tool-in{height:21px}
.chartcol{width:388px;flex:none;background:var(--lt);border-top:1px solid #2f8c78;border-left:1px solid #2f8c78;position:relative}
.chart{position:relative;height:164px;display:grid;grid-template-columns:55px 55px 56px 55px 55px 55px;align-items:end;padding-left:5px}
.chart-title{position:absolute;left:96px;top:3px;width:197px;height:21px;background:#b4fbff;border:1px solid #000;box-shadow:2px 2px 0 #5b9396;font:italic bold 15px/19px var(--mono);padding-left:3px;white-space:pre}
.bar-col{display:flex;flex-direction:column;align-items:center}
.bar-n{font:normal 15px/15px var(--mono);-webkit-text-stroke:.35px #000;margin-bottom:1px}
.bar-n-red{color:#e01010;-webkit-text-stroke:.35px #e01010}
.bar{width:100%;border:1px solid #000;border-bottom:0}
.b-r{background:#fe1a1a}
.b-y{background:#fffa17}
.b-g{background:#1ae81a}
.axis{height:4px;background:#000;margin-bottom:1px}
.bins{display:grid;grid-template-columns:55px 55px 56px 55px 55px 55px;padding-left:5px;height:29px}
.bin{border:1px solid #000;padding:2px 0 0 17px;overflow:hidden;font:normal 15px/15px var(--mono);-webkit-text-stroke:.35px #000;white-space:pre}
.hs-hist{margin:8px 1px 0 1px;height:13px;background:#82b3b3}
.hs-hist .hs-thumb{flex:none;width:276px;height:11px;background:var(--lt);border-color:#c8f5f5 #5b9396 #5b9396 #c8f5f5}
.hs-hist .ar:last-child{margin-left:auto}
.lowpanel{margin:2px 0 0 1px;width:386px;height:65px;border:2px solid #000;display:flex;background:var(--lt)}
.speclist{width:73px;padding:2px 3px;display:flex;flex-direction:column;overflow:hidden;flex:none;border-right:2px solid #c8f5f5;border-bottom:2px solid #c8f5f5;white-space:pre;font-size:14.500px}
.spec-on{background:#000;color:var(--lt);width:63px;overflow:hidden}
.speclist span{line-height:15px;margin-bottom:6px}
.vs-spec{margin:0;width:15px}
.vs-spec .vs-thumb{background:var(--lt);border-color:#c8f5f5 #5b9396 #5b9396 #c8f5f5}
.respane{flex:1;border-left:2px solid #000;padding-top:3px;text-align:center}
.res-title{line-height:15px;font-weight:normal;-webkit-text-stroke:.35px #000}
.res-val{width:60px;margin:7px 0 0 0;text-align:right;line-height:15px;font-weight:normal;-webkit-text-stroke:.35px #000}
.slider{height:14px;margin:2px 3px 0;background:#82b3b3;border:1px solid;border-color:#5b9396 #c8f5f5 #c8f5f5 #5b9396;position:relative}
.slider-thumb{position:absolute;left:23px;top:0;width:30px;height:12px;background:var(--lt);border:1px solid;border-color:#c8f5f5 #5b9396 #5b9396 #c8f5f5;box-shadow:inset -14px 0 0 var(--lt),inset -15px 0 0 #5b9396}
.sash{height:11px;flex:none;position:relative}
.sash::before{content:"";position:absolute;left:2px;right:0;top:4px;height:2px;background:#a3ebd9}
.sash-h{position:absolute;right:11px;top:0;width:9px;height:9px;background:var(--teal);border:1px solid;border-color:#a3ebd9 #2f8c78 #2f8c78 #a3ebd9}
.mappane{margin:-1px 6px 0 6px;height:161px;border:1px solid #000;flex:none;overflow:hidden}
.board{display:block;width:489px;height:159px}
.hist-foot{display:flex;align-items:flex-start;height:41px;margin-top:3px;padding-left:6px;flex:none}
.hist-foot>.tool{margin:2px 5px 0 0}
.hist-foot>.tool+.tool:nth-child(2){margin-right:3px}
.hist-status{width:342px;height:41px;background:var(--lt);border:1px solid #000;padding-left:4px;line-height:39px;font-weight:normal;margin-right:3px;white-space:pre;-webkit-text-stroke:.35px #000}
.tool-w{width:37px;height:37px}
.tool-w svg{width:29px;height:29px}
.hist-foot>.tool-w{margin-right:5px}
.hist-close{height:25px;margin:6px 2px 0;flex:none;font-weight:normal;-webkit-text-stroke:.35px #000}

/* checklist */
.win-check{left:1523px;top:34px;width:382px;height:863px;background:var(--lt)}
.ck-menu{height:35px;flex:none;border-bottom:1px solid #000;padding-top:1px}
.ck-menubox{width:137px;height:40px;display:flex;gap:17px;padding:8px 0 0 13px;font:bold 15px/16px var(--serif)}
.ck-strip{height:20px;flex:none;border-bottom:2px solid #143c3c}
.ck-body{flex:1;background:var(--teal);display:flex;min-height:0;padding:2px 0 0 3px}
.ck-list{width:354px;background:var(--lt);height:716px;flex:none}
.entry{height:119px;border-bottom:2px solid #000;padding-top:3px;display:flex;flex-direction:column}
.entry-first{height:120px;padding-top:4px}
.e1{display:flex;align-items:flex-start;height:30px;flex:none;padding-left:4px}
.e1 .chk{margin-top:6px}
.chipi{width:20px;height:20px;margin:6px 0 0 20px;flex:none}
.etitle{width:102px;margin:8px 3px 0 5px;font:bold 15.500px/16px var(--serif);white-space:nowrap;overflow:hidden;flex:none}
.erf{width:44px;height:29px;font-weight:normal;margin-top:1px;-webkit-text-stroke:.2px #000}
.field{width:104px;height:30px;margin-left:4px;font-weight:normal;padding:3px 0 0 3px;white-space:pre;-webkit-text-stroke:.2px #000}
.help{width:29px;height:29px;margin:1px 0 0 4px;font:bold 22px/22px "Liberation Sans",sans-serif;position:relative}
.help::after{content:"";position:absolute;inset:1px;border:1px solid #000}
.e2{display:flex;gap:5px;margin-top:6px;height:22px;flex:none;padding-left:3px}
.e2 .btn{font:bold 15.500px/16px var(--serif);height:22px}
.p1{width:112px}
.p2{width:115px}
.p3{width:113px}
.e3{display:flex;margin-top:3px;height:33px;flex:none;padding-left:4px}
.ib{width:29px;height:31px;margin:1px 4.500px 0 0;padding:1px;flex:none;display:flex;align-items:center;justify-content:center}
.ib svg{width:23px;height:24px}
.etime{width:168px;margin:1px 36px 0 -2.500px;text-align:center;font:normal 15px/15px var(--mono);padding-top:1px;-webkit-text-stroke:.2px #000;white-space:pre}
.mg{width:30px;margin-right:2px;background:var(--lt);border-color:#c8f5f5 #5b9396 #5b9396 #c8f5f5}
.st{width:17px;height:33px;flex:none;display:flex;align-items:center;justify-content:center;font:bold 14px/14px "Liberation Sans",sans-serif;color:#8a1010}
.st-red{background:#f52020}
.st-yel{background:#fffa17;color:#000}
.st-grn{background:#1ae81a}
.msg{height:19px;margin-top:1px;background:#fffcd5;font:normal 15px/19px var(--mono);padding-left:3px;white-space:pre;-webkit-text-stroke:.2px #000;flex:none}
.ck-close{height:29px;flex:none;margin-left:1px;font:bold 15px/20px var(--serif)}
```
